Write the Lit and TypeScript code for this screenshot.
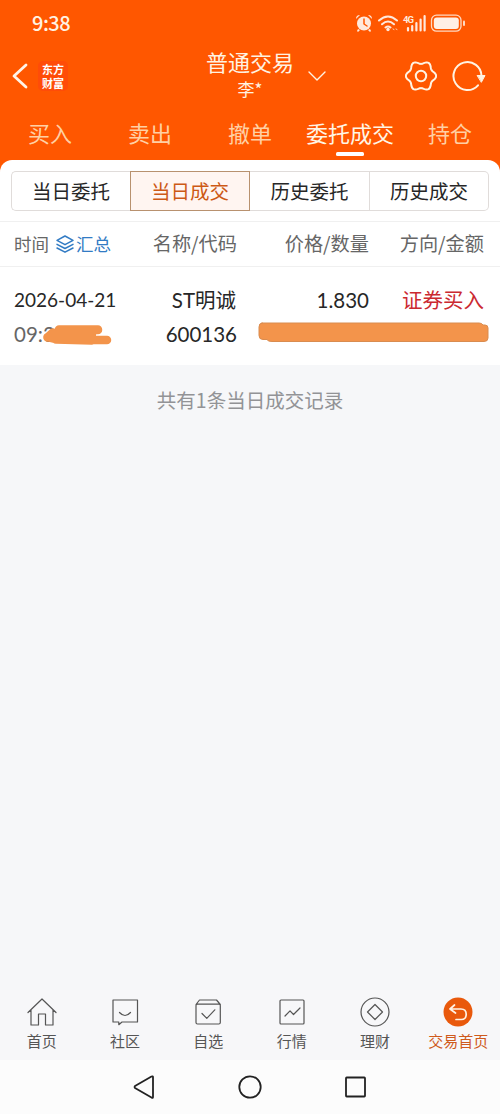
import { LitElement, html, css, svg } from "lit";
import { customElement } from "lit/decorators.js";
import { classMap } from "lit/directives/class-map.js";

const gearPoints = Array.from({ length: 120 }, (_, i) => {
  const a = (i / 120) * Math.PI * 2;
  const r = 13.6 + 1.5 * Math.cos(6 * a);
  return `${(16 + r * Math.cos(a)).toFixed(2)},${(16 + r * Math.sin(a)).toFixed(2)}`;
}).join(" ");

const navItems = [
  { label: "首页", icon: svg`<path d="M1 15.500 15 2l14 13.500M4 13v15h7.500V17h7v11H26V13"/>` },
  { label: "社区", icon: svg`<path d="M3 3h24.500v22H12l-3.200 2.700V25H3zM9.500 15.500q5.500 6 11 0"/>` },
  { label: "自选", icon: svg`<path d="M3 7.500 6.500 3h17l3.800 4.500M4.500 7.200h21.500q1.300 0 1.300 1.300v17q0 1.500-1.500 1.500H4.500Q3 27 3 25.500v-17q0-1.300 1.500-1.300zM9 16.500l4.800 4.800 8-8.500"/>` },
  { label: "行情", icon: svg`<rect x="3" y="3" width="24" height="24" rx="1"/><path d="m8 19 5-5.200 3.500 3.700 6.500-6.500"/>` },
  { label: "理财", icon: svg`<circle cx="15" cy="15" r="14"/><path d="m15 7.500 7.500 7.500-7.500 7.500L7.500 15z"/>` },
  { label: "交易首页", active: true, icon: svg`<circle cx="15" cy="15" r="14.500" fill="#e9590c" stroke="none"/><path d="M11.500 8 7 12l5.500 4M7.500 12h10.500q5.200 0 5.200 5.300t-5.200 5.200h-5" stroke="#fff3e6" stroke-width="1.700"/>` },
];

@customElement("app-root")
export class AppRoot extends LitElement {
  static styles = css`
    :host { display: flex; flex-direction: column; width: 500px; height: 1114px; overflow: hidden; background: #f6f7f9; color: #272727; font-family: "Noto Sans CJK SC", sans-serif; font-size: 19.500px; line-height: 1; }
    * { box-sizing: border-box; }
    svg { display: block; flex: none; fill: none; stroke: currentColor; stroke-linecap: round; stroke-linejoin: round; }
    .top { height: 160px; background: #ff5700; color: #fff3e2; flex: none; }
    .status { height: 45px; padding: 0 33px 0 32px; display: flex; align-items: center; justify-content: space-between; }
    .clock { font: 500 20px/24px "Noto Sans CJK SC", sans-serif; letter-spacing: -.5px; }
    .title { height: 65px; padding-bottom: 3px; display: grid; grid-template-columns: 206px 88px 1fr; align-items: center; }
    .left { display: flex; align-items: center; padding-left: 11px; gap: 9px; }
    .brand { width: 30px; height: 30px; padding-top: 2px; border-radius: 5px; background: #ff4c08; color: #fff; display: flex; flex-direction: column; align-items: center; gap: 2px; font: 700 11px/12px "Noto Sans CJK SC", sans-serif; }
    .names { display: flex; flex-direction: column; align-items: center; white-space: nowrap; padding-bottom: 4px; }
    .account { font-size: 22px; line-height: 29px; }
    .owner { font-size: 17px; line-height: 26px; }
    .right { display: flex; align-items: center; padding-left: 13px; }
    .gear { margin-left: 78px; }
    .reload { margin-left: 15px; }
    .tabs { height: 50px; display: grid; grid-template-columns: repeat(5, 1fr); }
    .tab { display: flex; flex-direction: column; align-items: center; font-size: 22px; line-height: 30px; padding-top: 7px; white-space: nowrap; color: #ffd0a4; }
    .tab.on { color: #fff6e6; }
    .bar { width: 28px; height: 4px; border-radius: 1.500px; background: #fff; margin-top: 5px; }
    .wrap { background: #ff5700; flex: none; }
    .panel { height: 205px; background: #fff; border-radius: 12px 12px 0 0; padding-top: 11px; }
    .segments { height: 40px; margin: 0 11px; display: grid; grid-template-columns: 119px 120px 120px 119px; }
    .seg { border: 1px solid #e0dcda; border-left-width: 0; display: grid; place-items: center; padding-bottom: 1px; }
    .seg:first-child { border-left-width: 1px; border-right-width: 0; border-radius: 5px 0 0 5px; }
    .seg:last-child { border-radius: 0 5px 5px 0; }
    .seg.on { border: 1px solid #b8916f; background: #fff5f1; color: #cd5915; }
    .heads, .record { display: grid; grid-template-columns: 104px 119px 132px 115px; padding: 0 15px 0 14px; text-align: right; white-space: nowrap; }
    .heads { height: 46px; margin-top: 10px; border: solid #f0f0f0; border-width: 1px 0; align-items: center; color: #666; font-size: 19.200px; }
    .time { display: flex; align-items: center; font-size: 17.500px; }
    .sum { display: flex; align-items: center; color: #327bc4; gap: 1px; margin-left: 6px; }
    .record { padding-top: 16px; grid-template-rows: 34px 34px; line-height: 34px; font-family: Lato, "Noto Sans CJK SC", sans-serif; }
    .date { font-size: 19px; text-align: left; }
    .name { font-size: 20.500px; margin: 0 1px 0 0; }
    .hour { text-align: left; color: #666; position: relative; font-size: 20.500px; }
    .scribble { position: absolute; left: 28px; top: 6px; }
    .num { font-size: 20.500px; }
    .buy { color: #cb2930; font-size: 20.500px; }
    .blot { grid-column: 3 / 5; justify-self: end; margin: 5px -5px 0 0; }
    .note { text-align: center; color: #929396; line-height: 30px; padding-top: 20px; flex: 1; }
    .nav { height: 70px; display: grid; grid-template-columns: repeat(6, 1fr); padding-top: 7px; background: #f7f7f9; }
    .item { display: flex; flex-direction: column; align-items: center; font-size: 15px; line-height: 22px; color: #555; gap: 3px; white-space: nowrap; }
    .item.on { color: #cf5a1c; }
    .item svg { stroke-width: 1.200px; }
    .system { height: 54px; display: flex; justify-content: center; align-items: center; gap: 80px; background: #fcfcfc; color: #222; }
  `;

  render() {
    return html`
      <header class="top">
        <div class="status">
          <span class="clock">9:38</span>
          <svg width="112" height="20" viewBox="0 0 112 20">
            <g stroke="none" fill="#ffe9dc"><circle cx="9" cy="10.500" r="7"/><path d="M1 6Q1 2 5 2zM17 6q0-4-4-4zM3 16l2 1-2 2-1-1zm12 0-2 1 2 2 1-1z"/></g>
            <path d="M9 6v5l3 2" stroke="#ff5700" stroke-width="1.500"/>
            <g stroke="#ffe9dc" stroke-width="2"><path d="M24 7.500q9-8 18 0M27 11.200q6-5.500 12 0M30.500 14.500q2.500-2 5 0"/></g>
            <circle cx="33" cy="16.500" r="1.700" fill="#ffe9dc" stroke="none"/><path d="m38 16 1 .5m2-.5 1 .5" stroke="#ffd0b4"/>
            <text x="48" y="9.500" fill="#ffe9dc" stroke="none" font-family="Roboto, sans-serif" font-weight="700" font-size="9.500" textLength="11">4G</text>
            <path d="M53 15v2.500M57.200 13v4.500M61.400 10v7.500M65.600 6.500v11M69.600 3v14.500" stroke="#ffe9dc" stroke-width="2.200"/>
            <rect x="76.500" y="2.200" width="29.500" height="16" rx="5" stroke="#ffd9c1" stroke-width="1.300"/><rect x="78.800" y="4.500" width="25" height="11.400" rx="3" fill="#ffefe5" stroke="none"/><path d="M109 8.500v3.500" stroke="#ffd9c1" stroke-width="2"/>
          </svg>
        </div>
        <div class="title">
          <div class="left">
            <svg width="18" height="28" viewBox="0 0 18 28"><path d="M15 3 3 14l12 11" stroke="#fff4e9" stroke-width="2.800"/></svg>
            <div class="brand"><span>东方</span><span>财富</span></div>
          </div>
          <div class="names"><div class="account">普通交易</div><div class="owner">李*</div></div>
          <div class="right">
            <svg width="20" height="12" viewBox="0 0 20 12"><path d="m2 2 8 8 8-8" stroke-width="1.400"/></svg>
            <svg class="gear" width="32" height="32" viewBox="0 0 32 32" stroke-width="2"><circle cx="16" cy="16" r="5.200"/><polygon points=${gearPoints}/></svg>
            <svg class="reload" width="34" height="32" viewBox="0 0 34 32"><path d="M29.500 16A14 14 0 1 0 26 25.300" stroke-width="2"/><path d="M25.500 15.500h7.500L29.500 22z" fill="#fff3e2" stroke-width="1"/></svg>
          </div>
        </div>
        <nav class="tabs">
          ${["买入", "卖出", "撤单", "委托成交", "持仓"].map((t, i) => html`<div class=${classMap({ tab: true, on: i === 3 })}>${t}${i === 3 ? html`<div class="bar"></div>` : ""}</div>`)}
        </nav>
      </header>
      <div class="wrap">
        <main class="panel">
          <div class="segments">
            ${["当日委托", "当日成交", "历史委托", "历史成交"].map((t, i) => html`<div class=${classMap({ seg: true, on: i === 1 })}>${t}</div>`)}
          </div>
          <div class="heads">
            <div class="time">时间<span class="sum"><svg width="20" height="20" viewBox="0 0 20 20" stroke-width="1.500"><path d="m10 2 8 4.300-8 4.400-8-4.400zM2 10.300l8 4.200 8-4.200M2 14l8 4.200 8-4.200"/></svg>汇总</span></div>
            <span>名称/代码</span><span>价格/数量</span><span>方向/金额</span>
          </div>
          <div class="record">
            <span class="date">2026-04-21</span><span class="name">ST明诚</span><span class="num">1.830</span><span class="buy">证券买入</span>
            <span class="hour">09:3<svg class="scribble" width="72" height="24" viewBox="0 0 72 24"><path d="M5.500 14.500 11 9.500M5.500 14 16 16.500M17 6.500H56M14 11H50M14 16.500 50 17.500M40 7H56M46 17H65" stroke="#f3944b" stroke-width="8.500"/></svg></span>
            <span class="num">600136</span>
            <svg class="blot" width="231" height="21" viewBox="0 0 231 21"><path d="M4 1h217q3 0 4 2h2q3 0 3 3v10q0 3.500-4 3.500H14q-4 0-5-2H5q-4 0-4-4V5q0-4 3-4z" fill="#f3944b" stroke="#d98c50" stroke-width="1"/></svg>
          </div>
        </main>
      </div>
      <div class="note">共有1条当日成交记录</div>
      <nav class="nav">
        ${navItems.map((n) => html`<div class=${classMap({ item: true, on: !!n.active })}><svg width="30" height="30" viewBox="0 0 30 30">${n.icon}</svg>${n.label}</div>`)}
      </nav>
      <footer class="system">
        <svg width="26" height="26" viewBox="0 0 26 26" stroke-width="1.800"><path d="M22 3v20Q22 24.500 20.500 23.500L4 14Q3 13 4 12L20.500 2.500Q22 2 22 3z"/></svg>
        <svg width="26" height="26" viewBox="0 0 26 26" stroke-width="1.800"><circle cx="13" cy="13" r="10.700"/></svg>
        <svg width="26" height="26" viewBox="0 0 26 26" stroke-width="1.800"><rect x="3" y="3.500" width="19" height="19" rx=".7"/></svg>
      </footer>
    `;
  }
}
